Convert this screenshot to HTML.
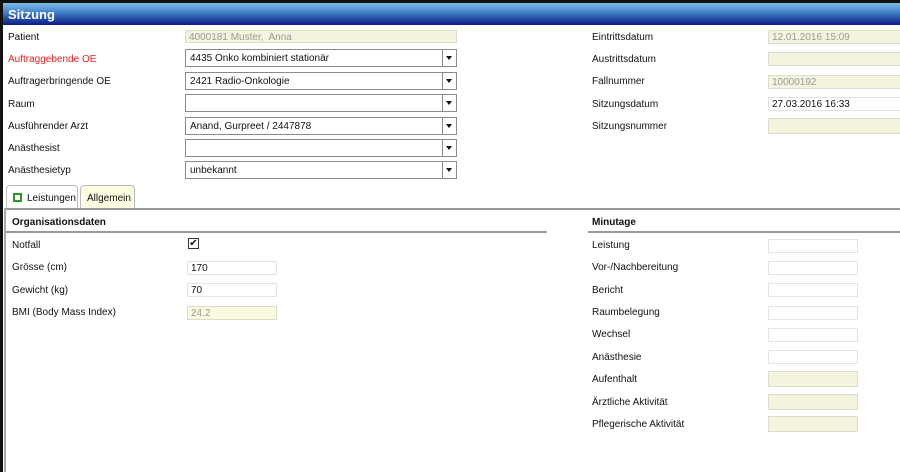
<!DOCTYPE html>
<html><head><meta charset="utf-8"><style>
body{margin:0;width:900px;height:472px;overflow:hidden;background:#fff;font-family:"Liberation Sans",Arial,sans-serif;font-size:10px;color:#111;position:relative}
.a{position:absolute}
.lbl{position:absolute;line-height:14px;margin-top:1px}
.sel{position:absolute;left:185px;width:272px;height:18px;border:1px solid #8a8a8a;background:#fff;box-sizing:border-box}
.sel span{position:absolute;left:4px;top:3px}
.sel i{position:absolute;right:0;top:0;width:13px;height:16px;border-left:1px solid #8a8a8a}
.sel i:after{content:"";position:absolute;left:3px;top:6px;border-left:3px solid transparent;border-right:3px solid transparent;border-top:4px solid #111}
.ro{position:absolute;background:#f4f3de;border:1px solid #dcdccc;box-sizing:border-box;height:14px;color:#999;padding-left:3px;line-height:13px}
.in{position:absolute;background:#fff;border:1px solid #e2e2e8;box-sizing:border-box;height:14px;padding-left:3px;line-height:13px}
</style></head><body>
<div class="a" style="left:0;top:0;width:900px;height:3px;background:#111"></div>
<div class="a" style="left:0;top:0;width:3px;height:472px;background:#111"></div>
<div class="a" style="left:3px;top:3px;width:897px;height:22px;background:linear-gradient(#7fbfe8,#3e7ec8 45%,#1d3e9a 80%,#0c1a8a)"></div>
<div class="a" style="left:8px;top:7px;color:#fff;font-weight:bold;font-size:13px">Sitzung</div>
<div class="a" style="left:4px;top:208px;width:2px;height:264px;background:#aaa"></div>

<div class="lbl" style="left:8px;top:30px">Patient</div>
<div class="ro" style="left:185px;top:30px;width:272px;height:13px">4000181 Muster,&nbsp; Anna</div>
<div class="lbl" style="left:8px;top:52px;color:#e82020">Auftraggebende OE</div>
<div class="sel" style="top:49px"><span>4435 Onko kombiniert stationär</span><i></i></div>
<div class="lbl" style="left:8px;top:74px">Auftragerbringende OE</div>
<div class="sel" style="top:72px"><span>2421 Radio-Onkologie</span><i></i></div>
<div class="lbl" style="left:8px;top:97px">Raum</div>
<div class="sel" style="top:94px"><span></span><i></i></div>
<div class="lbl" style="left:8px;top:119px">Ausführender Arzt</div>
<div class="sel" style="top:117px"><span>Anand, Gurpreet / 2447878</span><i></i></div>
<div class="lbl" style="left:8px;top:141px">Anästhesist</div>
<div class="sel" style="top:139px"><span></span><i></i></div>
<div class="lbl" style="left:8px;top:163px">Anästhesietyp</div>
<div class="sel" style="top:161px"><span>unbekannt</span><i></i></div>

<div class="lbl" style="left:592px;top:30px">Eintrittsdatum</div>
<div class="ro" style="left:768px;top:30px;width:140px">12.01.2016 15:09</div>
<div class="lbl" style="left:592px;top:52px">Austrittsdatum</div>
<div class="ro" style="left:768px;top:52px;width:140px"></div>
<div class="lbl" style="left:592px;top:74px">Fallnummer</div>
<div class="ro" style="left:768px;top:75px;width:140px">10000192</div>
<div class="lbl" style="left:592px;top:97px">Sitzungsdatum</div>
<div class="in" style="left:768px;top:97px;width:140px;color:#111">27.03.2016 16:33</div>
<div class="lbl" style="left:592px;top:119px">Sitzungsnummer</div>
<div class="ro" style="left:768px;top:118px;width:140px;height:16px"></div>

<div class="a" style="left:6px;top:185px;width:72px;height:24px;border:1px solid #bbb;border-bottom:none;border-radius:4px 4px 0 0;background:#fff;box-sizing:border-box"></div>
<div class="a" style="left:13px;top:193px;width:5px;height:5px;border:2px solid #2a9a2a"></div>
<div class="lbl" style="left:27px;top:191px">Leistungen</div>
<div class="a" style="left:80px;top:185px;width:55px;height:24px;border:1px solid #bbb;border-bottom:none;border-radius:4px 4px 0 0;background:#fdfbe0;box-sizing:border-box"></div>
<div class="lbl" style="left:87px;top:191px">Allgemein</div>
<div class="a" style="left:6px;top:208px;width:894px;height:2px;background:#999"></div>

<div class="lbl" style="left:12px;top:215px;font-weight:bold">Organisationsdaten</div>
<div class="a" style="left:6px;top:231px;width:541px;height:2px;background:#999"></div>
<div class="lbl" style="left:592px;top:215px;font-weight:bold">Minutage</div>
<div class="a" style="left:588px;top:231px;width:312px;height:2px;background:#999"></div>

<div class="lbl" style="left:12px;top:238px">Notfall</div>
<div class="a" style="left:188px;top:238px;width:11px;height:11px;border:1px solid #333;box-sizing:border-box;font-size:10px;line-height:9px;text-align:center">✔</div>
<div class="lbl" style="left:12px;top:260px">Grösse (cm)</div>
<div class="in" style="left:187px;top:261px;width:90px">170</div>
<div class="lbl" style="left:12px;top:283px">Gewicht (kg)</div>
<div class="in" style="left:187px;top:283px;width:90px">70</div>
<div class="lbl" style="left:12px;top:305px">BMI (Body Mass Index)</div>
<div class="ro" style="left:187px;top:306px;width:90px;background:#fbfadf">24.2</div>

<div class="lbl" style="left:592px;top:238px">Leistung</div><div class="in" style="left:768px;top:239px;width:90px"></div>
<div class="lbl" style="left:592px;top:260px">Vor-/Nachbereitung</div><div class="in" style="left:768px;top:261px;width:90px"></div>
<div class="lbl" style="left:592px;top:283px">Bericht</div><div class="in" style="left:768px;top:283px;width:90px"></div>
<div class="lbl" style="left:592px;top:305px">Raumbelegung</div><div class="in" style="left:768px;top:306px;width:90px"></div>
<div class="lbl" style="left:592px;top:327px">Wechsel</div><div class="in" style="left:768px;top:328px;width:90px"></div>
<div class="lbl" style="left:592px;top:350px">Anästhesie</div><div class="in" style="left:768px;top:350px;width:90px"></div>
<div class="lbl" style="left:592px;top:372px">Aufenthalt</div><div class="ro" style="left:768px;top:371px;width:90px;height:16px"></div>
<div class="lbl" style="left:592px;top:395px">Ärztliche Aktivität</div><div class="ro" style="left:768px;top:394px;width:90px;height:16px"></div>
<div class="lbl" style="left:592px;top:417px">Pflegerische Aktivität</div><div class="ro" style="left:768px;top:416px;width:90px;height:16px"></div>
</body></html>
